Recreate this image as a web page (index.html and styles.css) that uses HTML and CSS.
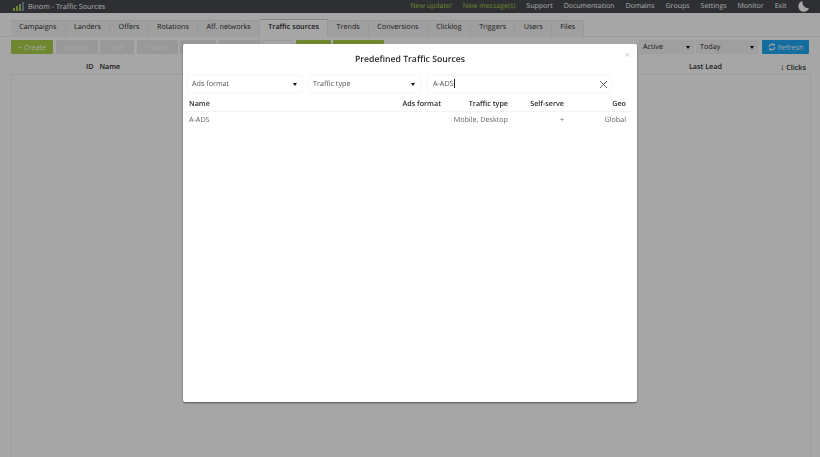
FILE: index.html
```html
<!DOCTYPE html>
<html>
  <head>
    <title>Binom - Traffic Sources</title>
    <link rel="stylesheet" href="styles.css">
  </head>
  <body>
    <div class="topbar">
      <div class="brand">
        <svg class="logo" width="11" height="9" viewBox="0 0 11 9"><path d="M0 9V6h2v3zM3 9V4h2v5zM6 9V2h2v7z" fill="#a5cc4a"/><path d="M9 9V0h2v9z" fill="#6f96c4"/></svg>
        <span>Binom - Traffic Sources</span>
      </div>
      <div class="topmenu">
        <a class="notice">New update!</a>
        <a class="notice">New message(s)</a>
        <a>Support</a>
        <a>Documentation</a>
        <a>Domains</a>
        <a>Groups</a>
        <a>Settings</a>
        <a>Monitor</a>
        <a>Exit</a>
        <svg class="moon" width="11" height="11" viewBox="0 0 12 12"><path d="M5 0a6 6 0 1 0 7 8A6.500 6.500 0 0 1 5 0z" fill="#fff"/></svg>
      </div>
    </div>

    <div class="tabs">
      <a class="tab">Campaigns</a>
      <a class="tab">Landers</a>
      <a class="tab">Offers</a>
      <a class="tab">Rotations</a>
      <a class="tab">Aff. networks</a>
      <a class="tab active">Traffic sources</a>
      <a class="tab">Trends</a>
      <a class="tab">Conversions</a>
      <a class="tab">Clicklog</a>
      <a class="tab">Triggers</a>
      <a class="tab">Users</a>
      <a class="tab">Files</a>
    </div>

    <div class="toolbar">
      <button class="btn green w-create">+ Create</button>
      <button class="btn grey w-import">Import</button>
      <button class="btn grey w-edit">Edit</button>
      <button class="btn grey w-clone">Clone</button>
      <button class="btn grey w-a"></button>
      <button class="btn grey w-b"></button>
      <button class="btn outline w-c"></button>
      <button class="btn green w-d"></button>
      <button class="btn green w-e"></button>
      <div class="toolbar-right">
        <div class="mini-select w-active">Active<i class="arrow"></i></div>
        <div class="mini-select w-today">Today<i class="arrow"></i></div>
        <button class="btn blue">
          <svg width="8" height="8" viewBox="0 0 10 10"><path d="M1.500 5a3.500 3.500 0 0 1 6-2.500M8.500 5a3.500 3.500 0 0 1-6 2.500" fill="none" stroke="#e8f4ff" stroke-width="1.400"/><path d="M8.500 0v3.500H5zM1.500 10V6.500H5z" fill="#e8f4ff"/></svg>
          Refresh
        </button>
      </div>
    </div>

    <div class="list">
      <div class="list-head">
        <span class="col-id">ID</span>
        <span class="col-name">Name</span>
        <span class="col-lead">Last Lead</span>
        <span class="col-clicks"><b class="sort">&#8595;</b> Clicks</span>
      </div>
      <div class="list-body"></div>
    </div>

    <div class="overlay"></div>

    <div class="modal">
      <span class="modal-close">&#215;</span>
      <h2 class="modal-title">Predefined Traffic Sources</h2>
      <div class="filters">
        <div class="select f-ads">Ads format<i class="arrow"></i></div>
        <div class="select f-type">Traffic type<i class="arrow"></i></div>
        <div class="select f-search">
          <span>A-ADS<i class="caret"></i></span>
          <svg width="9" height="9" viewBox="0 0 9 9"><path d="M1 1l7 7M8 1L1 8" stroke="#666" stroke-width="1"/></svg>
        </div>
      </div>
      <div class="row row-head">
        <span class="c-name">Name</span>
        <span class="c-format">Ads format</span>
        <span class="c-type">Traffic type</span>
        <span class="c-self">Self-serve</span>
        <span class="c-geo">Geo</span>
      </div>
      <div class="row row-item">
        <span class="c-name">A-ADS</span>
        <span class="c-format"></span>
        <span class="c-type">Mobile, Desktop</span>
        <span class="c-self">+</span>
        <span class="c-geo">Global</span>
      </div>
    </div>
  </body>
</html>
```

FILE: styles.css
```css
* {
  box-sizing: border-box;
}
html, body {
  height: 100%;
}
body {
  margin: 0;
  overflow: hidden;
  background: #fff;
  font-family: "Open Sans", sans-serif;
  font-size: 7.2px;
  color: #2a2a2a;
  text-rendering: geometricPrecision;
}

/* top bar */
.topbar {
  display: flex;
  justify-content: space-between;
  align-items: center;
  height: 13px;
  padding: 0 11.500px 0 13px;
  background: #45494f;
  color: #fff;
}
.brand {
  display: flex;
  align-items: center;
  gap: 4px;
}
.topmenu {
  display: flex;
  align-items: center;
  gap: 11px;
  font-size: 7px;
}
.notice {
  color: #a5cc4a;
}

/* tabs */
.tabs {
  display: flex;
  height: 18px;
  margin-top: 6px;
  padding-left: 11px;
  border-bottom: 1px solid #eee;
}
.tab {
  height: 17px;
  margin-top: 1px;
  padding: 1px 8.300px 0;
  border-right: 1px solid #e8e8e8;
  border-top: 1px solid #e8e8e8;
  background: #f4f4f4;
  white-space: nowrap;
}
.tab.active {
  height: 18px;
  margin-top: 0;
  padding-top: 2px;
  border-top: 1px solid #ccc;
  background: #fff;
  font-weight: 600;
}

/* toolbar */
.toolbar {
  display: flex;
  gap: 2.500px;
  height: 15px;
  margin-top: 3px;
  padding: 0 11px;
}
.btn {
  height: 14px;
  padding: 0;
  border: none;
  border-radius: 1px;
  font-family: inherit;
  font-size: 7.2px;
  color: #fff;
}
.green {
  background: #abd24a;
}
.grey {
  background: #ececec;
  color: #fff;
}
.outline {
  background: #fff;
  border: 1px solid #eee;
}
.blue {
  display: flex;
  align-items: center;
  justify-content: center;
  gap: 2px;
  width: 47px;
  background: #1fa8f5;
  color: #e8f4ff;
}
.w-create { width: 42px; }
.w-import { width: 42px; }
.w-edit { width: 34px; }
.w-clone { width: 41px; }
.w-a { width: 36px; }
.w-b { width: 42px; }
.w-c { width: 30px; }
.w-d { width: 35px; }
.w-e { width: 51px; }
.toolbar-right {
  display: flex;
  gap: 2px;
  margin-left: auto;
}
.mini-select {
  display: flex;
  justify-content: space-between;
  align-items: center;
  height: 14px;
  padding: 0 4px;
  background: #f4f4f4;
}
.w-active { width: 55px; }
.w-today { width: 62px; margin-right: 2px; }
.arrow {
  width: 0;
  height: 0;
  border-left: 2px solid transparent;
  border-right: 2px solid transparent;
  border-top: 3px solid #111;
}

/* list behind the dialog */
.list {
  margin: 5px 9px 0 11px;
}
.list-head {
  display: flex;
  align-items: center;
  height: 15px;
  border-bottom: 1px solid #eee;
  font-weight: 600;
}
.col-id {
  margin-left: 75px;
}
.col-name {
  margin-left: 6px;
}
.col-lead {
  margin-left: auto;
}
.col-clicks {
  margin-left: 58px;
  margin-right: 5px;
}
.sort {
  font-size: 9px;
  line-height: 1;
}
.list-body {
  height: 390px;
  border: 1px solid #f0f0f0;
  border-top: none;
  border-bottom: none;
}

.overlay {
  position: fixed;
  inset: 0;
  background: rgba(0, 0, 0, 0.35);
}

/* dialog */
.modal {
  position: fixed;
  left: 183px;
  top: 44px;
  width: 454px;
  height: 358px;
  padding: 0 5px;
  border-radius: 2px;
  background: #fff;
  box-shadow: 0 1px 2px rgba(0, 0, 0, 0.5);
}
.modal-close {
  position: absolute;
  top: 6px;
  right: 7px;
  font-size: 9px;
  line-height: 1;
  color: #c4c4c4;
}
.modal-title {
  margin: 8px 0 0;
  font-size: 8.700px;
  line-height: 14px;
  font-weight: 600;
  text-align: center;
  color: #2a2a2a;
}
.filters {
  display: flex;
  gap: 7px;
  margin-top: 10px;
}
.select {
  display: flex;
  justify-content: space-between;
  align-items: center;
  height: 16px;
  padding: 0 5px 0 4px;
  border-radius: 3px;
  background: #fff;
  box-shadow: 0 0 2px rgba(0, 0, 0, 0.12);
  color: #555;
}
.f-ads { width: 114px; }
.f-type { width: 111px; }
.f-search { width: 183px; margin-left: 1px; padding: 0 3px 0 5px; }
.caret {
  display: inline-block;
  width: 1px;
  height: 9px;
  margin-bottom: -2px;
  background: #222;
}
.row {
  display: flex;
  align-items: center;
  height: 15px;
  border-bottom: 1px solid #f3f3f3;
}
.row-head {
  margin-top: 5px;
  font-weight: 600;
  color: #2a2a2a;
}
.row-item {
  height: 16px;
  border-bottom: none;
  color: #666;
}
.c-name { width: 194px; margin-left: 1px; }
.c-format { width: 58px; text-align: right; }
.c-type { width: 67px; text-align: right; }
.c-self { width: 56px; text-align: right; }
.c-geo { width: 62px; text-align: right; }
```
